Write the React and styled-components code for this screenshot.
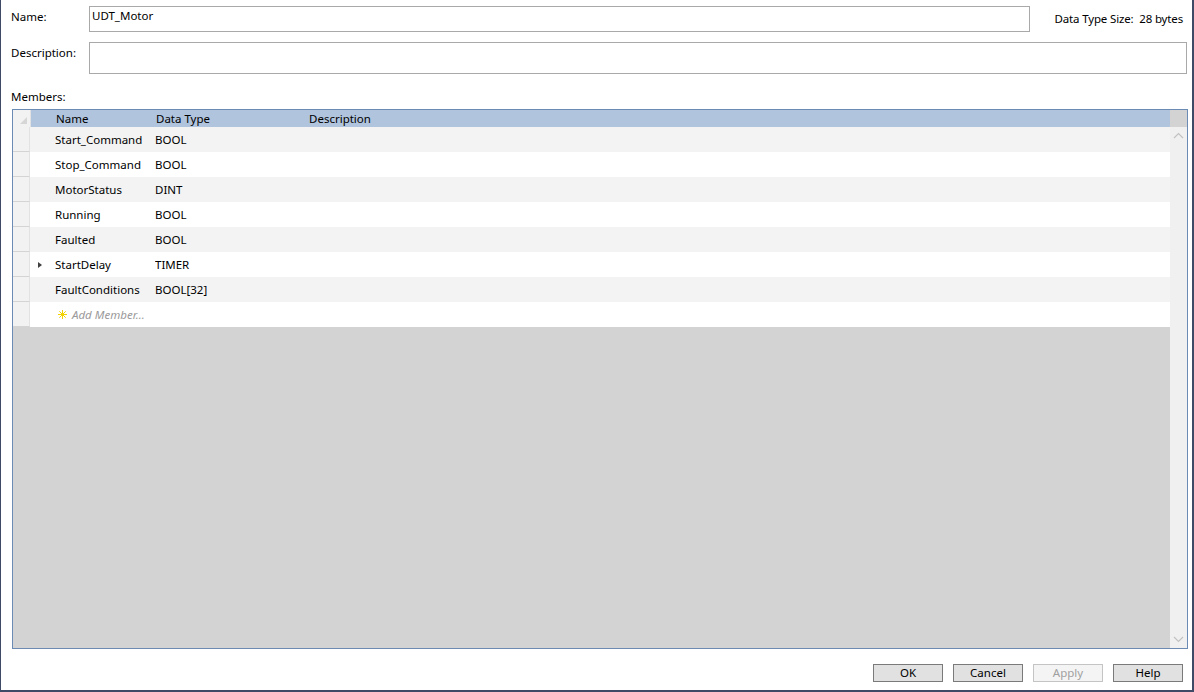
import React from 'react'
import styled, { createGlobalStyle } from 'styled-components'

const GlobalStyle = createGlobalStyle`
  html, body {
    margin: 0;
    padding: 0;
    background: #ffffff;
  }
  body {
    font-family: "Noto Sans", "Open Sans", sans-serif;
    font-size: 11.5px;
    color: #000;
  }
`;

const Window = styled.div`
  box-sizing: border-box;
  width: 1194px;
  height: 692px;
  background: #ffffff;
  border-left: 1px solid #3e4a66;
  border-right: 2px solid #3e4a66;
  border-bottom: 2px solid #3e4a66;
  display: flex;
  flex-direction: column;
  padding: 6px 5px 0 10px;
`;

const FieldRow = styled.div`
  display: flex;
  align-items: flex-start;
  margin-bottom: ${p => p.gap || 0}px;
`;

const Label = styled.div`
  flex: 0 0 78px;
  padding-top: 3px;
  line-height: 16px;
`;

const TextBox = styled.div`
  box-sizing: border-box;
  height: ${p => p.h}px;
  width: ${p => (p.w ? p.w + 'px' : 'auto')};
  flex: ${p => (p.w ? '0 0 auto' : '1')};
  border: 1px solid #a9a9a9;
  padding: 1px 2px;
  line-height: 16px;
`;

const SizeInfo = styled.div`
  flex: 1;
  text-align: right;
  padding-right: 4px;
  padding-top: 5px;
  line-height: 16px;
  white-space: nowrap;
  letter-spacing: -0.15px;
`;

const SectionLabel = styled.div`
  margin-top: 15px;
  line-height: 16px;
  height: 20px;
`;

const Grid = styled.div`
  box-sizing: border-box;
  margin-left: 1px;
  width: 1176px;
  height: 540px;
  border: 1px solid #6b8bb5;
  display: flex;
`;

const GridBody = styled.div`
  flex: 1;
  display: flex;
  flex-direction: column;
`;

const HeaderRow = styled.div`
  display: flex;
  height: 17px;
  background: #b0c4de;
  line-height: 17px;
`;

const Corner = styled.div`
  position: relative;
  width: 17px;
  background: #f2f2f2;
  border-right: 1px solid #e2e2e2;
  &::after {
    content: '';
    position: absolute;
    right: 3px;
    bottom: 3px;
    width: 0;
    height: 0;
    border-left: 7px solid transparent;
    border-bottom: 7px solid #d6d6d6;
  }
`;

const Cell = styled.div`
  box-sizing: border-box;
  width: ${p => (p.w ? p.w + 'px' : 'auto')};
  flex: ${p => (p.w ? '0 0 auto' : '1')};
  white-space: nowrap;
  overflow: hidden;
  display: flex;
  align-items: center;
`;

const Row = styled.div`
  display: flex;
  height: 25px;
  background: ${p => (p.alt ? '#f3f3f3' : '#ffffff')};
`;

const RowHeader = styled.div`
  box-sizing: border-box;
  width: 17px;
  background: #f2f2f2;
  border-right: 1px solid #e2e2e2;
  border-bottom: 1px solid #d4d4d4;
`;

const Expander = styled.div`
  width: 0;
  height: 0;
  margin-left: 8px;
  border-top: 3.5px solid transparent;
  border-bottom: 3.5px solid transparent;
  border-left: 4px solid #404040;
`;

const AddText = styled.span`
  font-style: italic;
  color: #9a9a9a;
  margin-left: 5px;
`;

const Fill = styled.div`
  flex: 1;
  background: #d3d3d3;
`;

const ScrollBar = styled.div`
  width: 17px;
  display: flex;
  flex-direction: column;
  background: #f0f0f0;
`;

const ScrollCorner = styled.div`
  height: 17px;
  background: #d3d3d3;
`;

const ScrollBtn = styled.div`
  height: 17px;
  display: flex;
  align-items: center;
  justify-content: center;
`;

const Track = styled.div`
  flex: 1;
`;

const ButtonBar = styled.div`
  display: flex;
  justify-content: flex-end;
  gap: 10px;
  margin-top: 15px;
  padding-right: 4px;
`;

const Button = styled.div`
  box-sizing: border-box;
  width: 70px;
  height: 18px;
  display: flex;
  align-items: center;
  justify-content: center;
  background: ${p => (p.disabled ? '#f4f4f4' : '#e1e1e1')};
  border: 1px solid ${p => (p.disabled ? '#c4c4c4' : '#7a7a7a')};
  color: ${p => (p.disabled ? '#a0a0a0' : '#000')};
  line-height: 16px;
`;

const Chevron = ({ up }) => (
  <svg width="11" height="7" viewBox="0 0 11 7">
    <path
      d={up ? 'M1 6 L5.5 1.5 L10 6' : 'M1 1 L5.5 5.5 L10 1'}
      fill="none"
      stroke="#c2c2c2"
      strokeWidth="1.2"
    />
  </svg>
);

const Spark = () => (
  <svg width="9" height="9" viewBox="0 0 9 9" style={{ marginLeft: 3 }}>
    <g stroke="#f2d200" strokeWidth="1">
      <line x1="4.5" y1="0" x2="4.5" y2="9" />
      <line x1="0" y1="4.5" x2="9" y2="4.5" />
      <line x1="1.3" y1="1.3" x2="7.7" y2="7.7" />
      <line x1="7.7" y1="1.3" x2="1.3" y2="7.7" />
    </g>
  </svg>
);

const members = [
  { name: 'Start_Command', type: 'BOOL' },
  { name: 'Stop_Command', type: 'BOOL' },
  { name: 'MotorStatus', type: 'DINT' },
  { name: 'Running', type: 'BOOL' },
  { name: 'Faulted', type: 'BOOL' },
  { name: 'StartDelay', type: 'TIMER', expand: true },
  { name: 'FaultConditions', type: 'BOOL[32]' },
];

const App = () => {
  return (
    <>
      <GlobalStyle />
      <Window>
        <FieldRow gap={10}>
          <Label>Name:</Label>
          <TextBox h={26} w={941}>UDT_Motor</TextBox>
          <SizeInfo>Data Type Size:&nbsp; 28 bytes</SizeInfo>
        </FieldRow>
        <FieldRow>
          <Label>Description:</Label>
          <TextBox h={32} />
        </FieldRow>
        <SectionLabel>Members:</SectionLabel>
        <Grid>
          <GridBody>
            <HeaderRow>
              <Corner />
              <Cell w={25} />
              <Cell w={100}>Name</Cell>
              <Cell w={153}>Data Type</Cell>
              <Cell>Description</Cell>
            </HeaderRow>
            {members.map((m, i) => (
              <Row key={m.name} alt={i % 2 === 0}>
                <RowHeader />
                <Cell w={25}>{m.expand && <Expander />}</Cell>
                <Cell w={100}>{m.name}</Cell>
                <Cell w={153}>{m.type}</Cell>
                <Cell />
              </Row>
            ))}
            <Row>
              <RowHeader />
              <Cell w={25} />
              <Cell>
                <Spark />
                <AddText>Add Member...</AddText>
              </Cell>
            </Row>
            <Fill />
          </GridBody>
          <ScrollBar>
            <ScrollCorner />
            <ScrollBtn><Chevron up /></ScrollBtn>
            <Track />
            <ScrollBtn><Chevron /></ScrollBtn>
          </ScrollBar>
        </Grid>
        <ButtonBar>
          <Button>OK</Button>
          <Button>Cancel</Button>
          <Button disabled>Apply</Button>
          <Button>Help</Button>
        </ButtonBar>
      </Window>
    </>
  )
}

export default App
